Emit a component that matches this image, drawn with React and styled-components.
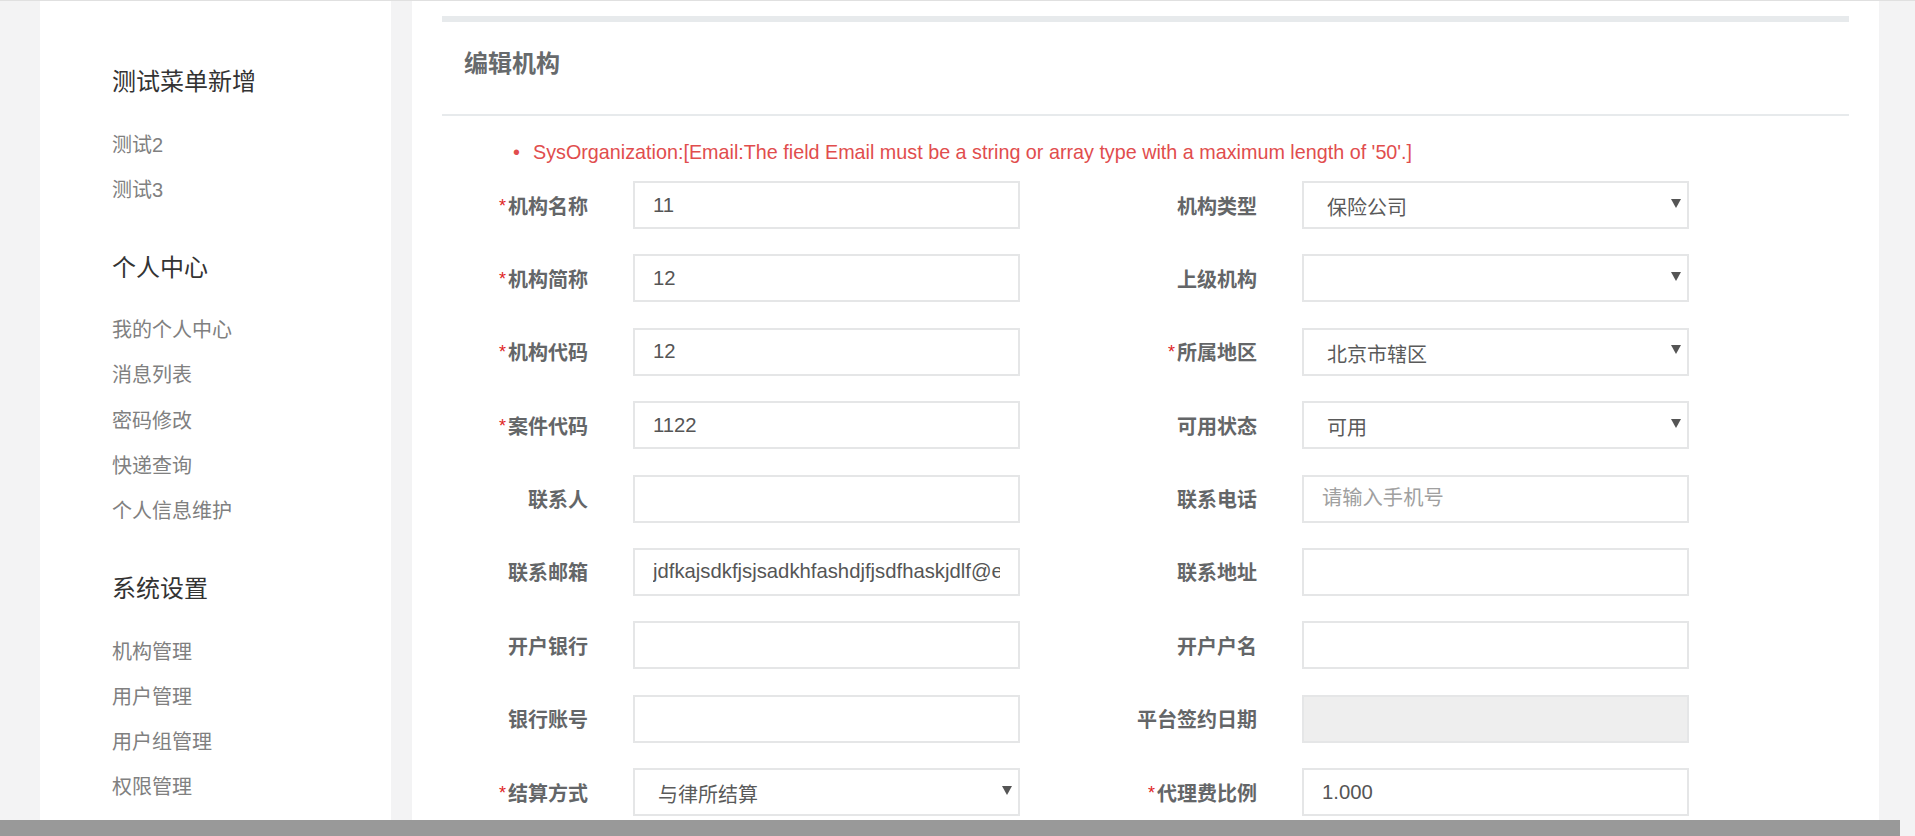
import React from 'react';
import styled, { createGlobalStyle } from 'styled-components';

const GlobalStyle = createGlobalStyle`
  html, body {
    margin: 0;
    padding: 0;
    background: #f3f3f4;
    overflow: hidden;
  }
  * {
    box-sizing: border-box;
  }
  body {
    font-family: "Liberation Sans", "Noto Sans CJK SC", sans-serif;
  }
`;

const MENU = [
  { title: '测试菜单新增', items: ['测试2', '测试3'] },
  { title: '个人中心', items: ['我的个人中心', '消息列表', '密码修改', '快递查询', '个人信息维护'] },
  { title: '系统设置', items: ['机构管理', '用户管理', '用户组管理', '权限管理'] },
];

const FIELDS = [
  { label: '机构名称', required: true, value: '11' },
  { label: '机构类型', kind: 'select', value: '保险公司' },
  { label: '机构简称', required: true, value: '12' },
  { label: '上级机构', kind: 'select', value: '' },
  { label: '机构代码', required: true, value: '12' },
  { label: '所属地区', required: true, kind: 'select', value: '北京市辖区' },
  { label: '案件代码', required: true, value: '1122' },
  { label: '可用状态', kind: 'select', value: '可用' },
  { label: '联系人', value: '' },
  { label: '联系电话', value: '', placeholder: '请输入手机号' },
  { label: '联系邮箱', value: 'jdfkajsdkfjsjsadkhfashdjfjsdfhaskjdlf@example.com' },
  { label: '联系地址', value: '' },
  { label: '开户银行', value: '' },
  { label: '开户户名', value: '' },
  { label: '银行账号', value: '' },
  { label: '平台签约日期', value: '', disabled: true },
  { label: '结算方式', required: true, kind: 'select', value: '与律所结算' },
  { label: '代理费比例', required: true, value: '1.000' },
];

const ERROR =
  "SysOrganization:[Email:The field Email must be a string or array type with a maximum length of '50'.]";

const Field = ({ field }) => (
  <FieldRow>
    <Label>
      {field.required && <Star>*</Star>}
      {field.label}
    </Label>
    {field.kind === 'select' ? (
      <SelectBox>
        <SelectText>{field.value}</SelectText>
        <Caret />
      </SelectBox>
    ) : (
      <Input
        readOnly
        defaultValue={field.value}
        placeholder={field.placeholder}
        disabled={field.disabled}
      />
    )}
  </FieldRow>
);

const App = () => {
  return (
    <Page>
      <GlobalStyle />
      <Main>
        <Sidebar>
          {MENU.map((group) => (
            <MenuGroup key={group.title}>
              <MenuTitle>{group.title}</MenuTitle>
              {group.items.map((item) => (
                <MenuItem key={item}>{item}</MenuItem>
              ))}
            </MenuGroup>
          ))}
        </Sidebar>
        <Content>
          <Panel>
            <PanelTitle>编辑机构</PanelTitle>
            <ErrorList>
              <ErrorItem>{ERROR}</ErrorItem>
            </ErrorList>
            <Form>
              {FIELDS.map((f) => (
                <Field key={f.label} field={f} />
              ))}
            </Form>
          </Panel>
        </Content>
      </Main>
      <ScrollBar />
    </Page>
  );
};

const Page = styled.div`
  display: flex;
  flex-direction: column;
  width: 1915px;
  height: 836px;
  border-top: 1px solid #e0e0e0;
  overflow: hidden;
`;
const Main = styled.div`
  display: flex;
  height: 819px;
  overflow: hidden;
`;
const Sidebar = styled.div`
  flex: none;
  margin-left: 40px;
  width: 351px;
  padding: 66px 0 0 72px;
  background: #fff;
  display: flex;
  flex-direction: column;
  gap: 40px;
`;
const MenuGroup = styled.div`
  display: flex;
  flex-direction: column;
`;
const MenuTitle = styled.div`
  font-size: 24px;
  line-height: 30px;
  color: #333;
  margin-bottom: 25.5px;
`;
const MenuItem = styled.div`
  font-size: 20px;
  line-height: 45.15px;
  color: #808080;
`;
const Content = styled.div`
  flex: none;
  margin-left: 21px;
  width: 1467px;
  padding: 15px 30px 0;
  background: #fff;
`;
const Panel = styled.div`
  border-top: 6px solid #e7eaec;
`;
const PanelTitle = styled.div`
  height: 94px;
  padding: 27px 22px 0;
  font-size: 24px;
  line-height: 30px;
  font-weight: 700;
  color: #676a6c;
  border-bottom: 2px solid #e7eaec;
`;
const ErrorList = styled.ul`
  list-style: none;
  margin: 24px 0 17px;
  padding: 0 0 0 70px;
`;
const ErrorItem = styled.li`
  display: flex;
  font-size: 19.75px;
  line-height: 24px;
  color: #e14d4d;
  &::before {
    content: '•';
    width: 20px;
    flex: none;
    padding-left: 1px;
  }
`;
const Form = styled.div`
  display: grid;
  grid-template-columns: 669px 669px;
  row-gap: 25.4px;
  padding-left: 26px;
`;
const FieldRow = styled.div`
  display: flex;
  align-items: center;
  gap: 45px;
`;
const Label = styled.div`
  flex: none;
  width: 120px;
  text-align: right;
  font-size: 20px;
  font-weight: 700;
  color: #646668;
  white-space: nowrap;
`;
const Star = styled.span`
  font-size: 18px;
  font-weight: 400;
  color: #e02424;
  margin-right: 2px;
  vertical-align: 2px;
`;
const Input = styled.input`
  width: 387px;
  height: 48px;
  padding: 0 18px;
  border: 2px solid #e5e6e7;
  border-radius: 0;
  outline: none;
  font-family: inherit;
  font-size: 20.3px;
  color: #555;
  background: #fff;
  &::placeholder {
    color: #a0a0a0;
  }
  &:disabled {
    background: #eee;
  }
`;
const SelectBox = styled.div`
  width: 387px;
  height: 48px;
  padding: 0 6px 0 23px;
  border: 2px solid #e5e6e7;
  display: flex;
  align-items: center;
  justify-content: space-between;
  background: #fff;
`;
const SelectText = styled.span`
  font-size: 20px;
  color: #5a5a5a;
  padding-top: 3px;
`;
const Caret = styled.span`
  width: 0;
  height: 0;
  border-left: 5px solid transparent;
  border-right: 5px solid transparent;
  border-top: 9px solid #555;
  margin-bottom: 4px;
`;
const ScrollBar = styled.div`
  width: 1900px;
  height: 16px;
  background: #999;
`;

export default App;
